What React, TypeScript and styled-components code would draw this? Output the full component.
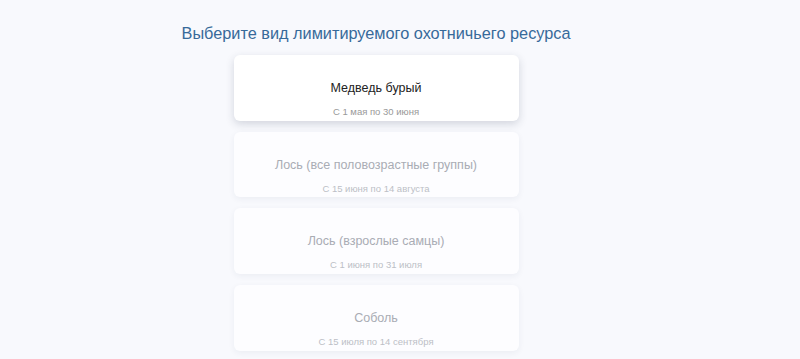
import styled, { createGlobalStyle } from "styled-components";

const GlobalStyle = createGlobalStyle`
  html, body {
    margin: 0;
    padding: 0;
    background: #f8f9fd;
    font-family: "Liberation Sans", Arial, sans-serif;
  }
`;

const Page = styled.div`
  width: 752px;
  height: 359px;
  overflow: hidden;
  display: flex;
  flex-direction: column;
  align-items: center;
`;

const Heading = styled.h2`
  margin: 23px 0 0;
  font-size: 16.3px;
  font-weight: normal;
  color: #376a9a;
  line-height: 20px;
`;

const List = styled.div`
  display: flex;
  flex-direction: column;
  gap: 11px;
  margin-top: 12px;
  width: 285px;
`;

const Card = styled.div<{ $active?: boolean }>`
  height: 65.7px;
  box-sizing: border-box;
  padding-top: 26px;
  border-radius: 6px;
  background: ${(p) => (p.$active ? "#ffffff" : "#fdfdff")};
  display: flex;
  flex-direction: column;
  align-items: center;
  box-shadow: ${(p) =>
    p.$active ? "0 3px 8px rgba(40, 50, 80, 0.18)" : "0 2px 6px rgba(40, 50, 80, 0.06)"};
  cursor: pointer;
`;

const Name = styled.div<{ $active?: boolean }>`
  font-size: 12.5px;
  line-height: 15px;
  color: ${(p) => (p.$active ? "#222" : "#a9acb4")};
`;

const Period = styled.div<{ $active?: boolean }>`
  margin-top: 10px;
  font-size: 9.5px;
  line-height: 11px;
  color: ${(p) => (p.$active ? "#999" : "#bcbfc6")};
`;

const resources = [
  { name: "Медведь бурый", period: "С 1 мая по 30 июня" },
  { name: "Лось (все половозрастные группы)", period: "С 15 июня по 14 августа" },
  { name: "Лось (взрослые самцы)", period: "С 1 июня по 31 июля" },
  { name: "Соболь", period: "С 15 июля по 14 сентября" },
];

export default function App() {
  return (
    <>
      <GlobalStyle />
      <Page>
        <Heading>Выберите вид лимитируемого охотничьего ресурса</Heading>
        <List>
          {resources.map((r, i) => (
            <Card key={r.name} $active={i === 0}>
              <Name $active={i === 0}>{r.name}</Name>
              <Period $active={i === 0}>{r.period}</Period>
            </Card>
          ))}
        </List>
      </Page>
    </>
  );
}
